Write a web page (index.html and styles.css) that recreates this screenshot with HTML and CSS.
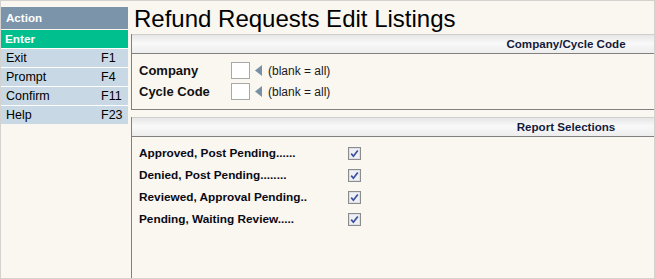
FILE: index.html
```html
<!DOCTYPE html>
<html lang="en">
<head>
<meta charset="utf-8">
<title>Refund Requests Edit Listings</title>
<link rel="stylesheet" href="styles.css">
</head>
<body>
<div class="window">
  <aside class="menu">
    <div class="menu-head">Action</div>
    <div class="menu-item active"><span>Enter</span></div>
    <div class="menu-item"><span>Exit</span><span class="key">F1</span></div>
    <div class="menu-item"><span>Prompt</span><span class="key">F4</span></div>
    <div class="menu-item"><span>Confirm</span><span class="key">F11</span></div>
    <div class="menu-item"><span>Help</span><span class="key">F23</span></div>
  </aside>
  <main class="content">
    <h1 class="title">Refund Requests Edit Listings</h1>
    <section class="panel panel-company">
      <div class="panel-head"><span class="panel-caption">Company/Cycle Code</span></div>
      <div class="panel-body company-body">
        <div class="field-row">
          <span class="field-label">Company</span>
          <span class="input"></span>
          <svg class="arrow" width="7" height="11" viewBox="0 0 7 11"><polygon points="7,0 7,11 0,5.5" fill="#7890a6"/></svg>
          <span class="hint">(blank = all)</span>
        </div>
        <div class="field-row">
          <span class="field-label">Cycle Code</span>
          <span class="input"></span>
          <svg class="arrow" width="7" height="11" viewBox="0 0 7 11"><polygon points="7,0 7,11 0,5.5" fill="#7890a6"/></svg>
          <span class="hint">(blank = all)</span>
        </div>
      </div>
    </section>
    <section class="panel panel-report">
      <div class="panel-head"><span class="panel-caption">Report Selections</span></div>
      <div class="panel-body report-body">
        <div class="check-row">
          <span class="check-label">Approved, Post Pending......</span>
          <svg class="check" width="13" height="13" viewBox="0 0 13 13"><rect x="0.5" y="0.5" width="12" height="12" fill="#eef0f4" stroke="#8c8c8c"/><rect x="1.5" y="1.5" width="10" height="10" fill="none" stroke="#dde0e8"/><path d="M3.2 6.6 L5.4 9.2 L9.8 3.4" fill="none" stroke="#3b4f9e" stroke-width="1.7"/></svg>
        </div>
        <div class="check-row">
          <span class="check-label">Denied, Post Pending........</span>
          <svg class="check" width="13" height="13" viewBox="0 0 13 13"><rect x="0.5" y="0.5" width="12" height="12" fill="#eef0f4" stroke="#8c8c8c"/><rect x="1.5" y="1.5" width="10" height="10" fill="none" stroke="#dde0e8"/><path d="M3.2 6.6 L5.4 9.2 L9.8 3.4" fill="none" stroke="#3b4f9e" stroke-width="1.7"/></svg>
        </div>
        <div class="check-row">
          <span class="check-label">Reviewed, Approval Pending..</span>
          <svg class="check" width="13" height="13" viewBox="0 0 13 13"><rect x="0.5" y="0.5" width="12" height="12" fill="#eef0f4" stroke="#8c8c8c"/><rect x="1.5" y="1.5" width="10" height="10" fill="none" stroke="#dde0e8"/><path d="M3.2 6.6 L5.4 9.2 L9.8 3.4" fill="none" stroke="#3b4f9e" stroke-width="1.7"/></svg>
        </div>
        <div class="check-row">
          <span class="check-label">Pending, Waiting Review.....</span>
          <svg class="check" width="13" height="13" viewBox="0 0 13 13"><rect x="0.5" y="0.5" width="12" height="12" fill="#eef0f4" stroke="#8c8c8c"/><rect x="1.5" y="1.5" width="10" height="10" fill="none" stroke="#dde0e8"/><path d="M3.2 6.6 L5.4 9.2 L9.8 3.4" fill="none" stroke="#3b4f9e" stroke-width="1.7"/></svg>
        </div>
      </div>
    </section>
  </main>
</div>
</body>
</html>
```

FILE: styles.css
```css
* { box-sizing: border-box; }

html, body {
  margin: 0;
  padding: 0;
  background: #faf6f0;
}

body {
  font-family: "Liberation Sans", Arial, sans-serif;
  color: #000;
}

.window {
  width: 655px;
  height: 279px;
  border: 1px solid #d4d2ce;
  background: #faf6f0;
  display: flex;
  align-items: stretch;
}

/* Left action menu */
.menu {
  width: 127px;
  margin-top: 6px;
  flex: none;
  display: flex;
  flex-direction: column;
  align-self: flex-start;
}

.menu-head {
  height: 23px;
  line-height: 22px;
  background: #7b94aa;
  border-bottom: 1px solid #faf6f0;
  color: #fff;
  font-weight: bold;
  font-size: 11.6px;
  padding-left: 5px;
}

.menu-item {
  height: 19px;
  line-height: 18px;
  background: #c9d8e5;
  border-bottom: 1px solid #fff;
  font-size: 12.5px;
  padding-left: 5px;
  display: flex;
}

.menu-item:last-child {
  border-bottom: none;
  height: 18px;
}

.menu-item.active {
  background: #00bf8e;
  color: #fff;
  font-weight: bold;
  font-size: 11.8px;
  padding-left: 4px;
}

.menu-item .key {
  margin-left: auto;
  width: 27px;
}

/* Main content */
.content {
  flex: 1;
  margin-left: 3px;
  display: flex;
  flex-direction: column;
  min-width: 0;
}

.title {
  margin: 0;
  height: 33px;
  padding-top: 2px;
  line-height: 31px;
  font-size: 24px;
  font-weight: normal;
  padding-left: 3px;
  color: #000;
}

.panel {
  border-left: 1px solid #808080;
  display: flex;
  flex-direction: column;
}

.panel-company {
  height: 76px;
  border-bottom: 1px solid #808080;
}

.panel-report {
  margin-top: 7px;
  flex: 1;
}

.panel-head {
  height: 20px;
  border-top: 1px solid #cfcfcf;
  border-bottom: 1px solid #808080;
  background: linear-gradient(#e6e6e6, #f9f9f9 45%, #ededed);
  display: flex;
  justify-content: flex-end;
}

.panel-caption {
  width: 176px;
  text-align: center;
  font-weight: bold;
  font-size: 11.6px;
  line-height: 18px;
  color: #141a3a;
}

.company-body {
  padding: 8px 0 0 7px;
  display: flex;
  flex-direction: column;
  gap: 4px;
}

.field-row {
  height: 17px;
  display: flex;
  align-items: center;
}

.field-label {
  width: 92px;
  font-weight: bold;
  font-size: 13px;
  line-height: 15px;
  color: #111;
}

.input {
  width: 19px;
  height: 17px;
  border: 1px solid #a8a8a8;
  background: #fff;
}

.arrow {
  margin-left: 5px;
  display: block;
}

.hint {
  margin-left: 6px;
  font-size: 12px;
  color: #1a1a1a;
}

.report-body {
  padding: 5px 0 0 7px;
  display: flex;
  flex-direction: column;
}

.check-row {
  height: 22px;
  display: flex;
  align-items: center;
}

.check-label {
  width: 209px;
  font-weight: bold;
  font-size: 11.8px;
  color: #0a0a14;
}

.check {
  display: block;
}
```
